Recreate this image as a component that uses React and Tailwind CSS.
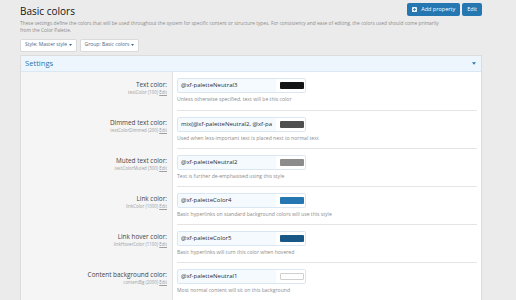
import React from 'react';

const rows = [
  {
    label: 'Text color:',
    sub: 'textColor (100)',
    value: '@xf-paletteNeutral3',
    swatch: 'bg-[#141414]',
    hint: 'Unless otherwise specified, text will be this color',
  },
  {
    label: 'Dimmed text color:',
    sub: 'textColorDimmed (200)',
    value: 'mix(@xf-paletteNeutral2, @xf-pa',
    swatch: 'bg-[#505050]',
    hint: 'Used when less-important text is placed next to normal text',
  },
  {
    label: 'Muted text color:',
    sub: 'textColorMuted (300)',
    value: '@xf-paletteNeutral2',
    swatch: 'bg-[#8c8c8c]',
    hint: 'Text is further de-emphasised using this style',
  },
  {
    label: 'Link color:',
    sub: 'linkColor (1000)',
    value: '@xf-paletteColor4',
    swatch: 'bg-[#2577b1]',
    hint: 'Basic hyperlinks on standard background colors will use this style',
  },
  {
    label: 'Link hover color:',
    sub: 'linkHoverColor (1100)',
    value: '@xf-paletteColor5',
    swatch: 'bg-[#185886]',
    hint: 'Basic hyperlinks will turn this color when hovered',
  },
  {
    label: 'Content background color:',
    sub: 'contentBg (2000)',
    value: '@xf-paletteNeutral1',
    swatch: 'bg-[#fefefe] border border-[#cfcfcf]',
    hint: 'Most normal content will sit on this background',
  },
];

const Caret = ({ className }) => (
  <svg viewBox="0 0 6 4" className={className}>
    <path d="M0 0 L6 0 L3 4 Z" fill="currentColor" />
  </svg>
);

const ColorRow = ({ row, index }) => (
  <div className="flex h-[38px]">
    {/* Label column */}
    <div className="w-[152px] shrink-0 bg-[#f5f5f5] border-r border-[#e2e2e2] pr-[5px] pt-[9px] text-right">
      <div className="text-[6.4px] leading-[8px] text-[#444444]">{row.label}</div>
      <div className="text-[4.4px] leading-[6px] text-[#a0a0a0]">
        {row.sub} <span className="underline">Edit</span>
      </div>
    </div>

    {/* Value column */}
    <div className="flex-1 pl-[4px] pr-[4px]">
      <div className={`h-full ${index > 0 ? 'border-t border-[#e4e4e4]' : ''} pt-[6px]`}>
        <div className="flex h-[15px] w-[129px] border border-[#dae6f2] rounded-[2px] overflow-hidden">
          <div className="flex-1 min-w-0 bg-[#f5faff] pl-[3px] text-[6px] leading-[13px] text-[#2a2a2a] whitespace-nowrap">
            {row.value}
          </div>
          <div className="w-[29px] shrink-0 bg-white flex items-center justify-end pr-[1px]">
            <div className={`w-[24px] h-[7px] rounded-[1px] ${row.swatch}`} />
          </div>
        </div>
        <div className="mt-[3px] text-[5.1px] leading-[7px] text-[#8c8c8c] whitespace-nowrap">{row.hint}</div>
      </div>
    </div>
  </div>
);

export default function App() {
  return (
    <div className="min-h-[300px] bg-[#ebebeb] overflow-hidden" style={{ fontFamily: '"Open Sans", sans-serif' }}>
      <div className="w-[462px] ml-[20px]">
        {/* Title row */}
        <div className="flex items-start justify-between pt-[3px] h-[17px]">
          <h1 className="text-[10px] leading-[14px] text-[#141414] mt-[1px]">Basic colors</h1>
          <div className="flex gap-[2px]">
            <button className="h-[13px] px-[5px] bg-[#2577b1] text-white text-[5.5px] rounded-[2px] flex items-center gap-[4px]">
              <svg viewBox="0 0 6 6" className="w-[5px] h-[5px]">
                <rect x="0" y="0" width="6" height="6" rx="1" fill="#e8f1f8" />
                <path d="M3 1.3 V4.7 M1.3 3 H4.7" stroke="#2577b1" strokeWidth="1" />
              </svg>
              Add property
            </button>
            <button className="h-[13px] px-[5px] bg-[#2577b1] text-white text-[5.5px] rounded-[2px]">Edit</button>
          </div>
        </div>

        {/* Description */}
        <p className="mt-[2.5px] text-[4.85px] leading-[7px] text-[#8c8c8c] whitespace-nowrap">
          These settings define the colors that will be used throughout the system for specific content or structure types. For consistency and ease of editing, the colors used should come primarily
          <br />
          from the Color Palette.
        </p>

        {/* Filter buttons */}
        <div className="flex gap-[3px] mt-[5px]">
          <button className="h-[13px] px-[4px] bg-white border border-[#dadada] rounded-[2px] text-[5px] text-[#3f6a8c] flex items-center gap-[1.5px]">
            Style: Master style <Caret className="w-[3px] h-[2px]" />
          </button>
          <button className="h-[13px] px-[4px] bg-white border border-[#dadada] rounded-[2px] text-[5px] text-[#3f6a8c] flex items-center gap-[1.5px]">
            Group: Basic colors <Caret className="w-[3px] h-[2px]" />
          </button>
        </div>

        {/* Settings block */}
        <div className="mt-[3px] bg-white border border-[#dcdcdc] border-b-0">
          <div className="h-[16px] bg-[#edf6fd] border-b border-[#dbe7f2] flex items-center justify-between pl-[4px] pr-[5px]">
            <span className="text-[7.6px] leading-[10px] text-[#2577b1]">Settings</span>
            <Caret className="w-[4px] h-[3px] text-[#2577b1]" />
          </div>
          {rows.map((row, i) => (
            <ColorRow key={row.sub} row={row} index={i} />
          ))}
        </div>
      </div>
    </div>
  );
}
